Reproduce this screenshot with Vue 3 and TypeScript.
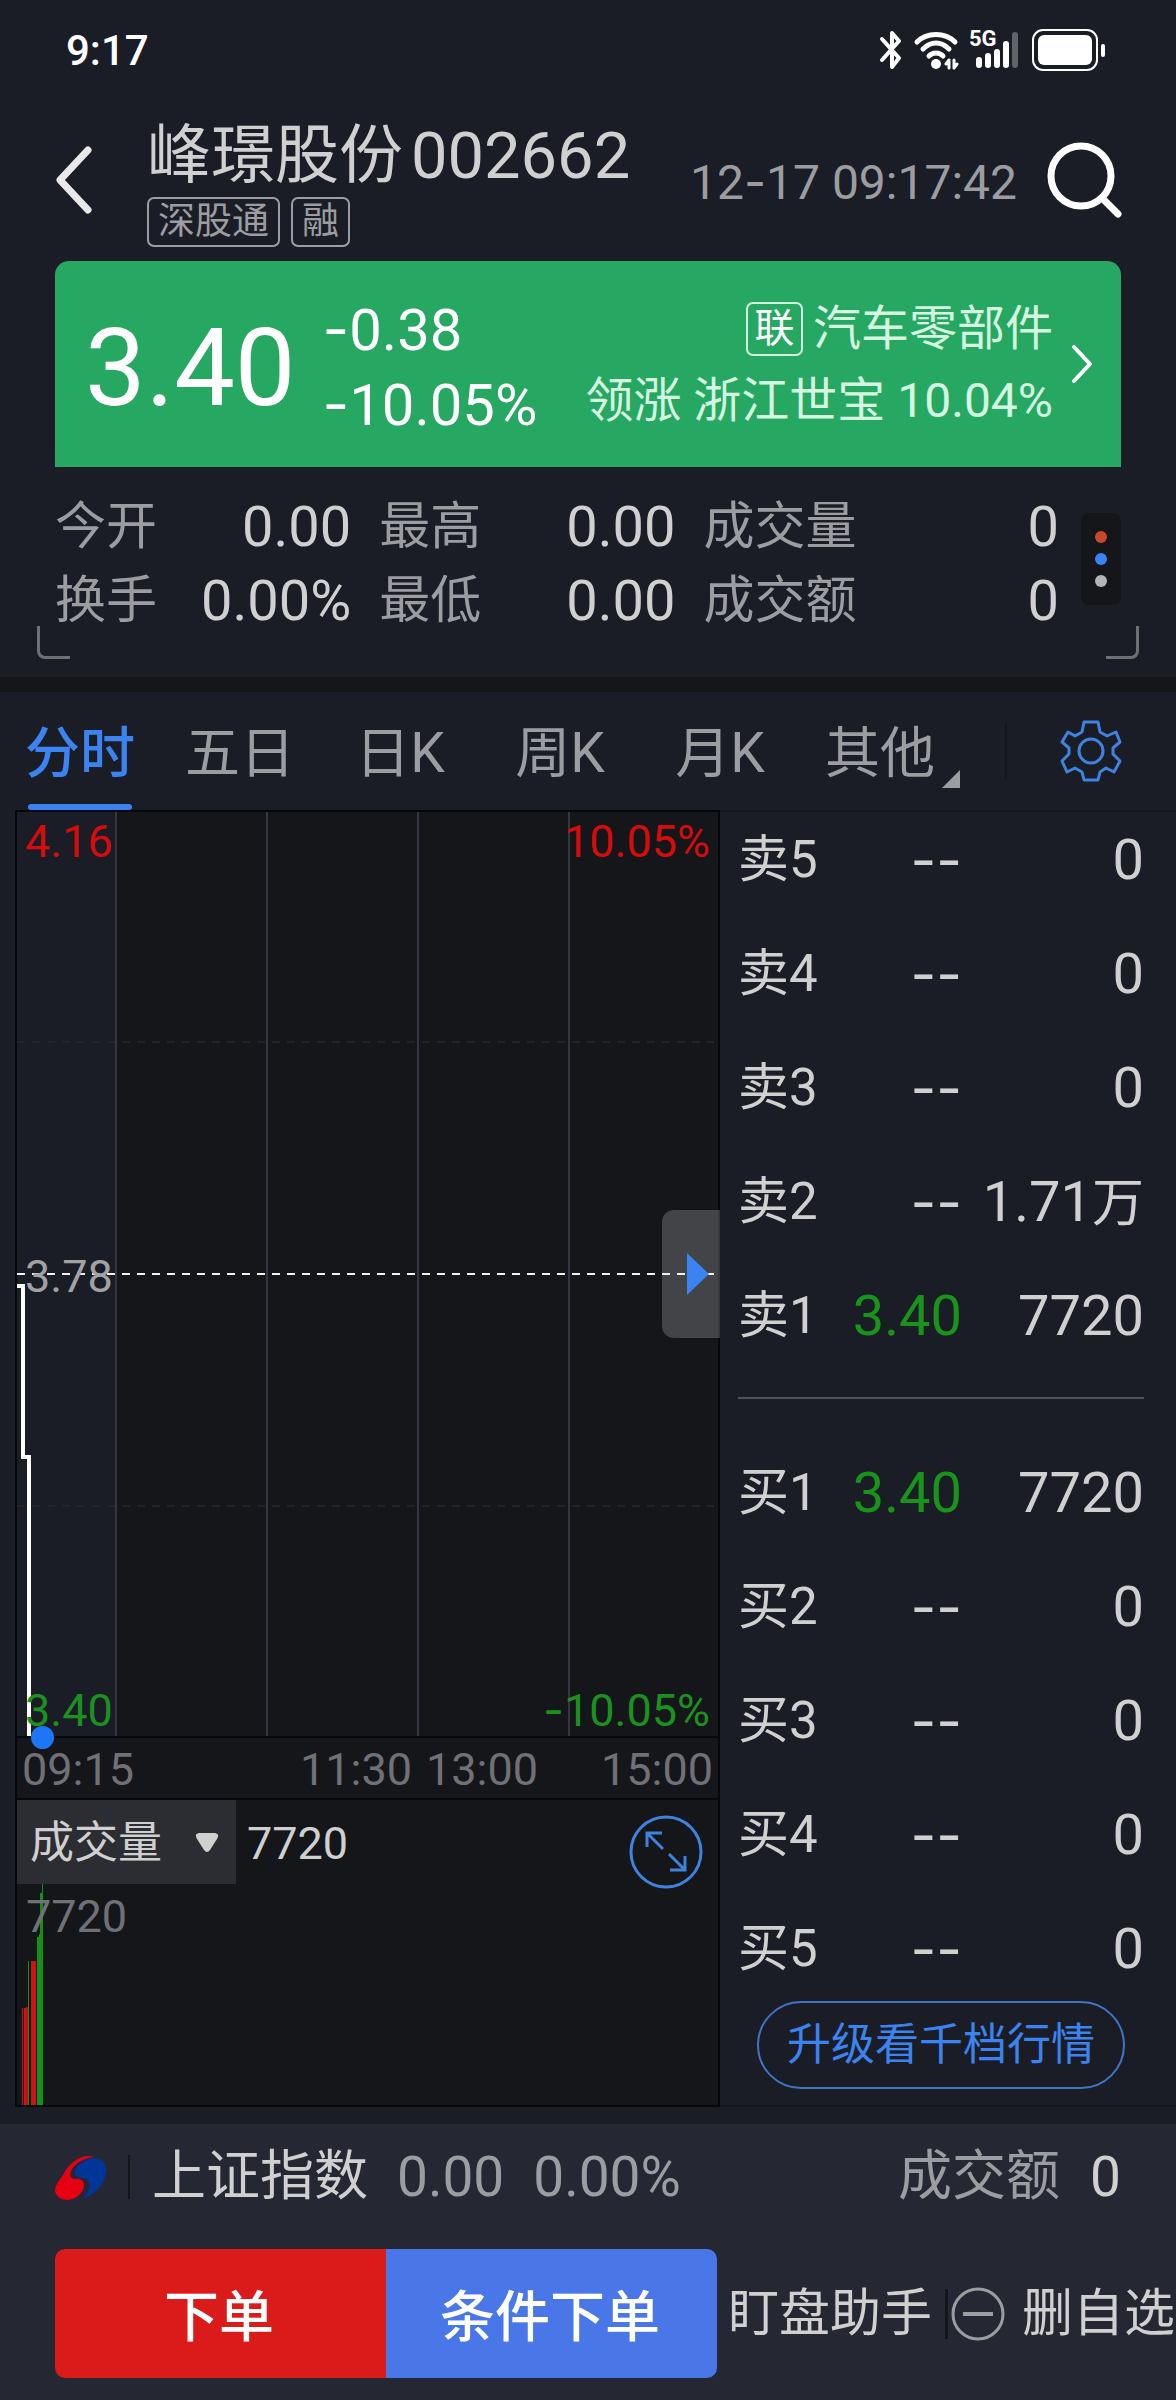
<script setup lang="ts">
import { ref } from 'vue'

interface Quote {
  label: string
  value: string
}
interface Order {
  label: string
  price: string
  volume: string
  unit?: string
}
interface Bar {
  x: number
  width: number
  height: number
  color: string
}

const stats: Quote[][] = [
  [
    { label: '今开', value: '0.00' },
    { label: '换手', value: '0.00%' },
  ],
  [
    { label: '最高', value: '0.00' },
    { label: '最低', value: '0.00' },
  ],
  [
    { label: '成交量', value: '0' },
    { label: '成交额', value: '0' },
  ],
]

const tabs: string[] = ['分时', '五日', '日K', '周K', '月K', '其他']
const activeTab = ref('分时')
const indicator = ref('成交量')

const asks: Order[] = [
  { label: '卖5', price: '--', volume: '0' },
  { label: '卖4', price: '--', volume: '0' },
  { label: '卖3', price: '--', volume: '0' },
  { label: '卖2', price: '--', volume: '1.71', unit: '万' },
  { label: '卖1', price: '3.40', volume: '7720' },
]
const bids: Order[] = [
  { label: '买1', price: '3.40', volume: '7720' },
  { label: '买2', price: '--', volume: '0' },
  { label: '买3', price: '--', volume: '0' },
  { label: '买4', price: '--', volume: '0' },
  { label: '买5', price: '--', volume: '0' },
]
const books = [
  { name: '卖盘', rows: asks },
  { name: '买盘', rows: bids },
]

const red = '#d01212'
const green = '#149114'
const bars: Bar[] = [
  { x: 5, width: 1, height: 97, color: red },
  { x: 7, width: 2, height: 97, color: red },
  { x: 9, width: 2, height: 98, color: '#b01515' },
  { x: 11, width: 1, height: 144, color: green },
  { x: 14, width: 2, height: 144, color: red },
  { x: 16, width: 3, height: 144, color: red },
  { x: 20, width: 2, height: 168, color: green },
  { x: 22, width: 1, height: 171, color: green },
  { x: 23, width: 2, height: 212, color: green },
  { x: 25, width: 1, height: 221, color: green },
]
</script>

<template>
  <div class="page">
    <div class="status">
      <span class="clock">9:17</span>
      <div class="status-icons">
        <svg width="24" height="42" viewBox="0 0 24 42" fill="none" stroke="#fff" stroke-width="4" stroke-linejoin="round" stroke-linecap="round">
          <path d="M3 10L20 29L13 38V4L20 12L3 31" />
        </svg>
        <svg width="46" height="42" viewBox="0 0 46 42" fill="none" stroke="#fff" stroke-width="5" stroke-linecap="round">
          <path d="M4 13C14 3 32 3 42 13" />
          <path d="M10 20C18 12 28 12 36 20" />
          <path d="M16 27C20 23 26 23 30 27" />
          <circle cx="23" cy="35" r="5" fill="#fff" stroke="none" />
          <path d="M36 32V39M33 35L36 31M41 31V38M44 35L41 39" stroke-width="3" />
        </svg>
        <div class="signal">
          <span class="net">5G</span>
          <svg width="50" height="42" viewBox="0 0 50 42" stroke="#fff" stroke-width="6" stroke-linecap="round">
            <path d="M10 31V36M19 27V36M28 23V36M37 15V36" />
            <path d="M46 6V36" stroke="#62636a" />
          </svg>
        </div>
        <svg width="74" height="42" viewBox="0 0 74 42">
          <rect x="1" y="1" width="64" height="40" rx="10" fill="none" stroke="#fff" stroke-width="2" />
          <rect x="6" y="6" width="54" height="30" rx="6" fill="#fff" />
          <rect x="69" y="15" width="4" height="13" rx="2" fill="#fff" />
        </svg>
      </div>
    </div>

    <header class="header">
      <button class="icon-btn" aria-label="返回">
        <svg width="42" height="72" viewBox="0 0 42 72" fill="none" stroke="#e9e9ea" stroke-width="7" stroke-linecap="round" stroke-linejoin="round">
          <path d="M36 5L8 35L36 65" />
        </svg>
      </button>
      <div class="name-block">
        <h1 class="name"><span>峰璟股份</span><span class="code">002662</span></h1>
        <div class="tags">
          <span class="tag">深股通</span>
          <span class="tag">融</span>
        </div>
      </div>
      <time class="time">12<span class="sign">-</span>17 09:17:42</time>
      <button class="icon-btn" aria-label="搜索">
        <svg width="76" height="78" viewBox="0 0 76 78" fill="none" stroke="#fff" stroke-width="7" stroke-linecap="round">
          <circle cx="35" cy="34" r="30" />
          <path d="M56 56L72 72" />
        </svg>
      </button>
    </header>

    <section class="card">
      <span class="price">3.40</span>
      <div class="change">
        <span><span class="sign">-</span>0.38</span>
        <span><span class="sign">-</span>10.05%</span>
      </div>
      <a class="sector" href="#sector">
        <div class="sector-text">
          <span class="sector-name"><b class="link-tag">联</b>汽车零部件</span>
          <span>领涨 浙江世宝 10.04%</span>
        </div>
        <svg width="22" height="42" viewBox="0 0 22 42" fill="none" stroke="#fff" stroke-width="4" stroke-linecap="round" stroke-linejoin="round">
          <path d="M3 4L19 21L3 38" />
        </svg>
      </a>
    </section>

    <section class="stats">
      <dl v-for="(col, i) in stats" :key="i" class="stat-col" :class="{ wide: i === 2 }">
        <div v-for="item in col" :key="item.label" class="stat">
          <dt>{{ item.label }}</dt>
          <dd>{{ item.value }}</dd>
        </div>
      </dl>
      <button class="dots" aria-label="更多指标"><i></i><i></i><i></i></button>
      <span class="corner left"></span>
      <span class="corner right"></span>
    </section>

    <nav class="tabs">
      <div class="tab-list">
        <button
          v-for="tab in tabs"
          :key="tab"
          class="tab"
          :class="{ active: tab === activeTab, more: tab === '其他' }"
          @click="activeTab = tab"
        >
          {{ tab }}
        </button>
      </div>
      <div class="tab-tools">
        <span class="tab-line"></span>
        <button class="icon-btn" aria-label="设置">
          <svg width="62" height="62" viewBox="0 0 62 62" fill="none" stroke="#3f82e0" stroke-width="3" stroke-linejoin="round">
            <path d="M24 2H38L40 12L47 16L56 12L60 22L53 28V34L60 41L54 52L46 48L40 52L38 60H24L22 52L15 48L7 52L2 41L9 34V28L2 22L8 12L15 16L22 12Z" />
            <circle cx="31" cy="31" r="12" />
          </svg>
        </button>
      </div>
    </nav>

    <main class="main">
      <div class="charts">
        <div class="plot">
          <svg class="plot-svg" viewBox="0 0 701 924" preserveAspectRatio="none" fill="none">
            <rect x="0" y="0" width="98" height="924" fill="#1b1d26" />
            <path d="M99 0V924M250 0V924M401 0V924M552 0V924" stroke="#353642" stroke-width="2" />
            <path d="M0 230H697M0 694H697" stroke="#22242a" stroke-width="2" stroke-dasharray="8 7" />
            <path d="M0 462H697" stroke="#f2f2f2" stroke-width="2" stroke-dasharray="8 7" />
            <path d="M0 474H6V645H12V925" stroke="#fff" stroke-width="4" />
          </svg>
          <span class="axis top-left">4.16</span>
          <span class="axis top-right">10.05%</span>
          <span class="axis mid-left">3.78</span>
          <span class="axis low-left">3.40</span>
          <span class="axis low-right"><span class="sign">-</span>10.05%</span>
          <span class="now-dot"></span>
          <button class="handle" aria-label="展开">
            <svg width="22" height="42" viewBox="0 0 22 42"><path d="M0 0L22 21L0 42Z" fill="#3b83f0" /></svg>
          </button>
        </div>
        <div class="times">
          <div class="half first"><span>09:15</span><span>11:30</span></div>
          <div class="half second"><span>13:00</span><span>15:00</span></div>
        </div>
        <div class="volume">
          <svg class="bars" width="60" height="221" viewBox="0 0 60 221">
            <rect v-for="bar in bars" :key="bar.x" :x="bar.x" :y="221 - bar.height" :width="bar.width" :height="bar.height" :fill="bar.color" />
          </svg>
          <div class="volume-head">
            <label class="picker">
              <select v-model="indicator" aria-label="指标">
                <option>成交量</option>
                <option>成交额</option>
              </select>
              <svg width="24" height="20" viewBox="0 0 24 20"><path d="M4 0H20Q25 1 22 6L15 17Q12 21 9 17L2 6Q-1 1 4 0Z" fill="#d0d0d0" /></svg>
            </label>
            <span class="volume-now">7720</span>
            <button class="icon-btn expand" aria-label="全屏">
              <svg width="76" height="76" viewBox="0 0 76 76" fill="none" stroke="#3f82e0" stroke-width="3">
                <circle cx="38" cy="38" r="35" />
                <path d="M19 33V19H34M19 19L35 35M41 40L57 56M57 42V56H42" />
              </svg>
            </button>
          </div>
          <span class="volume-max">7720</span>
        </div>
      </div>

      <div class="book">
        <table v-for="book in books" :key="book.name" :aria-label="book.name">
          <tbody>
            <tr v-for="row in book.rows" :key="row.label">
              <th scope="row">{{ row.label }}</th>
              <td :class="row.price === '--' ? 'empty' : 'down'">{{ row.price }}</td>
              <td class="qty">{{ row.volume }}<small v-if="row.unit">{{ row.unit }}</small></td>
            </tr>
          </tbody>
        </table>
        <button class="upgrade">升级看千档行情</button>
      </div>
    </main>

    <footer class="footer">
      <div class="index">
        <svg width="52" height="46" viewBox="0 0 52 46">
          <path d="M39 3C30 -1 15 6 8 21C3 28 0 32 0 37C1 43 7 46 13 46C22 45 29 38 29 31C29 26 25 24 20 25C15 25 14 21 17 15C21 9 29 4 39 3Z" fill="#e60012" />
          <path d="M39 4C48 5 53 12 51 19C49 32 38 42 26 45C35 38 37 31 33 26C29 23 22 25 20 20C19 12 29 5 39 4Z" fill="#00359a" />
        </svg>
        <span class="index-line"></span>
        <span class="index-name">上证指数</span>
        <span class="index-num">0.00</span>
        <span class="index-num">0.00%</span>
        <span class="index-label">成交额</span>
        <span class="index-amount">0</span>
      </div>
      <div class="actions">
        <div class="trade">
          <button class="buy">下单</button>
          <button class="cond">条件下单</button>
        </div>
        <button class="text-btn">盯盘助手</button>
        <span class="action-line"></span>
        <button class="text-btn remove">
          <svg width="54" height="54" viewBox="0 0 54 54" fill="none" stroke="#9c9da1" stroke-width="3">
            <circle cx="27" cy="27" r="25" />
            <path d="M12 27H42" stroke-width="4" />
          </svg>
          删自选
        </button>
      </div>
    </footer>
  </div>
</template>

<style>
body {
  background: #1b1d26;
}
</style>

<style scoped>
.page {
  background: #1b1d26;
  color: #d0d0d0;
  font-family: Roboto, 'Noto Sans CJK SC', sans-serif;
  white-space: nowrap;
  overflow: hidden;
}
.page * {
  box-sizing: border-box;
}
button,
select {
  font: inherit;
  color: inherit;
  background: none;
  border: 0;
  padding: 0;
  margin: 0;
}
svg {
  display: block;
  flex: none;
}
.icon-btn {
  flex: none;
}
.sign {
  font-family: Inter, sans-serif;
}

.status {
  display: flex;
  justify-content: space-between;
  align-items: center;
  height: 100px;
  padding: 0 70px 0 66px;
}
.clock {
  padding-top: 2px;
  font-size: 42px;
  font-weight: 500;
  line-height: 52px;
  color: #fff;
}
.status-icons {
  display: flex;
  align-items: center;
  gap: 10px;
}
.signal {
  position: relative;
  margin-right: 3px;
}
.net {
  position: absolute;
  left: 0;
  top: 0;
  font-size: 22px;
  font-weight: 700;
  line-height: 20px;
  color: #fff;
}

.header {
  display: flex;
  align-items: center;
  height: 161px;
  padding: 0 54px 0 52px;
}
.name-block {
  margin-left: 53px;
  padding-top: 14px;
}
.name {
  display: flex;
  gap: 8px;
  margin: 0;
  font-size: 64px;
  font-weight: 400;
  line-height: 82px;
}
.code {
  font-size: 65px;
}
.tags {
  display: flex;
  gap: 11px;
  padding-bottom: 14px;
}
.tag {
  height: 50px;
  padding: 0 9px;
  border: 2px solid #9c9da1;
  border-radius: 7px;
  color: #9c9da1;
  font-size: 37px;
  line-height: 46px;
}
.time {
  margin-left: auto;
  margin-right: 29px;
  padding-top: 4px;
  color: #9c9da1;
  font-size: 48px;
  line-height: 56px;
}

.card {
  display: flex;
  align-items: center;
  height: 206px;
  margin: 0 55px;
  padding: 0 28px 0 30px;
  border-radius: 14px 14px 0 0;
  background: #27a862;
  color: #fff;
}
.price {
  padding-top: 7px;
  font-size: 108px;
  line-height: 120px;
}
.change {
  display: flex;
  flex-direction: column;
  margin-left: 27px;
  padding-top: 5px;
  font-size: 58px;
  line-height: 74px;
}
.sector {
  display: flex;
  align-items: center;
  gap: 18px;
  margin-left: auto;
  color: #d5f6e1;
  text-decoration: none;
}
.sector-text {
  display: flex;
  flex-direction: column;
  align-items: flex-end;
  padding-top: 2px;
  font-size: 48px;
  line-height: 72px;
}
.sector-name {
  display: flex;
  align-items: center;
  gap: 10px;
}
.link-tag {
  width: 57px;
  height: 54px;
  border: 2px solid #d5f6e1;
  border-radius: 7px;
  color: #fff;
  font-size: 40px;
  font-weight: 400;
  line-height: 50px;
  text-align: center;
}

.stats {
  position: relative;
  display: flex;
  align-items: center;
  gap: 28px;
  height: 210px;
  padding: 0 55px 17px;
}
.stat-col {
  flex: 5;
  margin: 0;
}
.stat-col.wide {
  flex: 6;
}
.stat {
  display: flex;
  justify-content: space-between;
  line-height: 74px;
}
.stat dt {
  color: #9c9da1;
  font-size: 51px;
}
.stat dd {
  margin: 0;
  font-size: 56px;
}
.dots {
  display: flex;
  flex-direction: column;
  justify-content: center;
  align-items: center;
  gap: 10px;
  width: 40px;
  height: 92px;
  margin: 0 0 9px -6px;
  border-radius: 8px;
  background: #15161a;
}
.dots i {
  width: 12px;
  height: 12px;
  border-radius: 50%;
  background: #c8482f;
}
.dots i:nth-child(2) {
  background: #3b83f0;
}
.dots i:nth-child(3) {
  background: #b4b4b8;
}
.corner {
  position: absolute;
  bottom: 18px;
  width: 33px;
  height: 33px;
  border-bottom: 3px solid #6f7074;
}
.corner.left {
  left: 37px;
  border-left: 3px solid #6f7074;
  border-bottom-left-radius: 8px;
}
.corner.right {
  right: 37px;
  border-right: 3px solid #6f7074;
  border-bottom-right-radius: 8px;
}

.tabs {
  display: grid;
  grid-template-columns: 960fr 216fr;
  height: 133px;
  border-top: 15px solid #15161a;
}
.tab-list {
  display: flex;
}
.tab {
  position: relative;
  flex: 1;
  padding-top: 5px;
  color: #9c9da1;
  font-size: 55px;
  line-height: 113px;
  text-align: center;
}
.tab.active {
  color: #3b83f0;
  font-weight: 500;
}
.tab.active::after {
  content: '';
  position: absolute;
  left: 28px;
  right: 28px;
  bottom: 0;
  height: 6px;
  border-radius: 3px;
  background: #3b83f0;
}
.tab.more::after {
  content: '';
  position: absolute;
  right: 0;
  bottom: 22px;
  border-left: 18px solid transparent;
  border-bottom: 18px solid #9c9da1;
}
.tab-tools {
  display: flex;
  align-items: center;
  justify-content: space-between;
  padding: 0 54px 0 45px;
}
.tab-line {
  width: 2px;
  height: 56px;
  background: #15161a;
}

.main {
  display: grid;
  grid-template-columns: 705fr 456fr;
  height: 1297px;
  padding-left: 15px;
}
.charts {
  min-width: 0;
  background: #15161a;
}
.plot {
  position: relative;
  height: 928px;
  border: 2px solid #06070b;
}
.plot-svg {
  width: 100%;
  height: 924px;
}
.axis {
  position: absolute;
  font-size: 45px;
  line-height: 60px;
}
.top-left,
.top-right {
  top: 0;
  color: #d40c0c;
}
.top-left,
.mid-left,
.low-left {
  left: 8px;
}
.top-right,
.low-right {
  right: 8px;
}
.mid-left {
  top: 435px;
  color: #a2a2a5;
}
.low-left,
.low-right {
  bottom: -5px;
  color: #1b911f;
}
.now-dot {
  position: absolute;
  left: 14px;
  bottom: -13px;
  width: 23px;
  height: 23px;
  border-radius: 50%;
  background: #1c76f6;
}
.handle {
  position: absolute;
  right: -2px;
  top: 398px;
  display: flex;
  align-items: center;
  justify-content: center;
  width: 58px;
  height: 128px;
  padding-left: 14px;
  border-radius: 12px 0 0 12px;
  background: rgba(255, 255, 255, 0.2);
}
.times {
  display: grid;
  grid-template-columns: 401fr 300fr;
  height: 60px;
  border: solid #06070b;
  border-width: 0 2px;
  color: #707176;
  font-size: 45px;
  line-height: 63px;
}
.half {
  display: flex;
  justify-content: space-between;
}
.half.first {
  padding: 0 6px 0 5px;
}
.half.second {
  padding: 0 5px 0 8px;
}
.volume {
  position: relative;
  height: 309px;
  border: 2px solid #06070b;
}
.bars {
  position: absolute;
  left: 0;
  bottom: 0;
}
.volume-head {
  display: flex;
  align-items: center;
  height: 84px;
}
.picker {
  display: flex;
  align-items: center;
  justify-content: space-between;
  width: 219px;
  height: 84px;
  padding: 2px 17px 0 13px;
  background: #2c2d32;
}
.picker select {
  appearance: none;
  width: 140px;
  font-size: 44px;
  line-height: 60px;
  outline: none;
}
.volume-now {
  margin-left: 11px;
  padding-top: 4px;
  font-size: 45px;
  line-height: 60px;
}
.expand {
  margin: 20px 14px 0 auto;
}
.volume-max {
  position: relative;
  display: block;
  padding-left: 9px;
  color: #707176;
  font-size: 45px;
  line-height: 66px;
}

.book {
  min-width: 0;
  padding: 13px 32px 0 18px;
  box-shadow: inset 0 2px #15161a, inset 0 -2px #15161a;
}
table {
  width: 100%;
  border-collapse: collapse;
  table-layout: fixed;
}
table + table {
  margin-top: 44px;
  border-top: 2px solid #50525c;
}
th {
  width: 90px;
  padding: 0 0 40px;
  font-size: 51px;
  font-weight: 400;
  line-height: 74px;
  text-align: left;
}
td {
  padding: 0 0 40px;
  font-size: 56px;
  line-height: 74px;
  text-align: right;
}
td.qty {
  width: 182px;
}
small {
  font-size: 52px;
  line-height: 60px;
}
tr:last-child > * {
  padding-bottom: 0;
}
table + table tr:first-child > * {
  padding-top: 57px;
}
.empty {
  font-family: Inter, sans-serif;
}
.down {
  color: #179419;
}
.upgrade {
  display: block;
  width: 368px;
  height: 88px;
  margin: 15px auto 0;
  border: 2px solid #3f75c4;
  border-radius: 44px;
  color: #3b83f0;
  font-size: 44px;
  line-height: 84px;
}

.footer {
  margin-top: 17px;
  padding: 13px 0 22px 55px;
  background: #252732;
}
.index {
  display: flex;
  align-items: center;
  height: 80px;
  padding-right: 55px;
  font-size: 55px;
  line-height: 80px;
}
.index-line {
  width: 2px;
  height: 44px;
  margin: 0 22px 0 21px;
  background: #15161a;
}
.index-name,
.index-label {
  font-size: 54px;
}
.index-num {
  margin-left: 29px;
  color: #9c9da1;
}
.index-label {
  margin-left: auto;
  color: #9c9da1;
}
.index-amount {
  margin-left: 30px;
}
.actions {
  display: flex;
  align-items: center;
  margin-top: 32px;
}
.trade {
  display: flex;
  flex: 1;
  height: 129px;
  border-radius: 10px;
  overflow: hidden;
  color: #fff;
  font-size: 55px;
  font-weight: 500;
}
.trade button {
  flex: 1;
  padding: 0 3px 4px 0;
}
.buy {
  background: #db1b19;
}
.cond {
  background: #4a77e8;
}
.text-btn {
  font-size: 51px;
  line-height: 60px;
}
.trade + .text-btn {
  margin-left: 11px;
}
.action-line {
  width: 3px;
  height: 50px;
  margin: 0 3px 0 13px;
  background: #15161a;
}
.remove {
  display: flex;
  align-items: center;
  gap: 17px;
  margin-right: 1px;
}
</style>
